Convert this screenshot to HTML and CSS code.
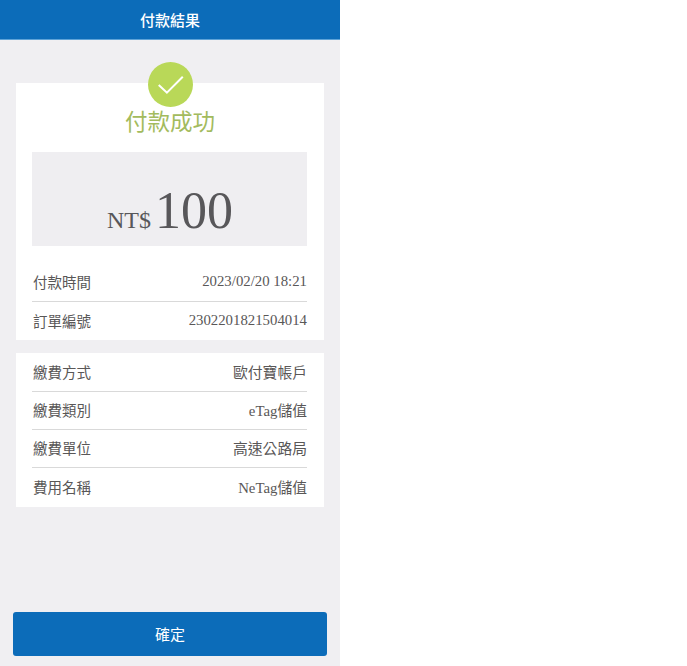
FILE: index.html
```html
<!DOCTYPE html>
<html lang="zh-Hant">
<head>
<meta charset="utf-8">
<title>付款結果</title>
<link rel="stylesheet" href="styles.css">
</head>
<body>
<main class="phone">
  <header class="topbar">付款結果</header>
  <div class="content">
    <section class="card summary">
      <svg class="check" width="45" height="45" viewBox="0 0 44 44" aria-hidden="true">
        <circle cx="22" cy="22" r="22" fill="#b9d858"/>
        <path d="M10.500 22.500 L18.500 30 L34 14.500" fill="none" stroke="#fff" stroke-width="2"/>
      </svg>
      <h1 class="status">付款成功</h1>
      <div class="amount"><span class="currency">NT$</span><span class="value">100</span></div>
      <div class="rows">
        <div class="row"><span class="label">付款時間</span><span class="val">2023/02/20 18:21</span></div>
        <div class="row"><span class="label">訂單編號</span><span class="val">2302201821504014</span></div>
      </div>
    </section>
    <section class="card details">
      <div class="rows">
        <div class="row"><span class="label">繳費方式</span><span class="val">歐付寶帳戶</span></div>
        <div class="row"><span class="label">繳費類別</span><span class="val">eTag儲值</span></div>
        <div class="row"><span class="label">繳費單位</span><span class="val">高速公路局</span></div>
        <div class="row"><span class="label">費用名稱</span><span class="val">NeTag儲值</span></div>
      </div>
    </section>
    <button class="confirm" type="button">確定</button>
  </div>
</main>
</body>
</html>
```
FILE: styles.css
```css
html, body {
  margin: 0;
  padding: 0;
  background: #fff;
}
body {
  font-family: "Liberation Serif", "Noto Sans CJK TC", serif;
  color: #595757;
}
.phone {
  width: 340px;
  height: 666px;
  background: #f0eff2;
  display: flex;
  flex-direction: column;
}
.topbar {
  height: 39px;
  line-height: 39px;
  flex: none;
  background: #0c6cb9;
  border-bottom: 1px solid #5ea3d8;
  color: #fff;
  text-align: center;
  font-family: "Noto Sans CJK TC", sans-serif;
  font-size: 15px;
  font-weight: 500;
}
.content {
  flex: 1;
  display: flex;
  flex-direction: column;
  padding: 43.400px 16px 10.500px;
}
.card {
  background: #fff;
  padding: 0 16px;
}
.summary {
  height: 257px;
  box-sizing: border-box;
  display: flex;
  flex-direction: column;
  align-items: stretch;
}
.check {
  align-self: center;
  margin-top: -21.600px;
  flex: none;
}
.status {
  margin: 0;
  height: 45.500px;
  line-height: 26px;
  text-align: center;
  font-family: "Noto Sans CJK TC", sans-serif;
  font-size: 22.500px;
  font-weight: 400;
  color: #a3bb5d;
}
.amount {
  height: 94px;
  margin-right: 1px;
  background: #efeef1;
  display: flex;
  justify-content: center;
  align-items: baseline;
  padding-left: 1px;
  line-height: 118px;
  color: #58575a;
}
.currency {
  font-size: 24px;
  margin-right: 4px;
}
.value {
  font-size: 52px;
}
.rows {
  display: flex;
  flex-direction: column;
}
.summary .rows {
  margin-top: 18px;
}
.row {
  height: 38px;
  box-sizing: border-box;
  display: flex;
  justify-content: space-between;
  align-items: center;
  padding: 0 0 2px 1px;
  border-bottom: 1px solid #d9d9d9;
  margin-right: 1px;
  font-size: 15px;
}
.details .row {
  height: 38.330px;
}
.row:last-child {
  border-bottom: 0;
}
.label {
  font-family: "Noto Sans CJK TC", sans-serif;
  font-weight: 400;
  font-size: 14.500px;
  color: #595757;
}
.val {
  color: #595757;
  font-size: 14.800px;
}
.details {
  margin-top: 13px;
}
.confirm {
  margin: auto -3px 0;
  height: 43.500px;
  padding: 0 0 1px;
  border: 0;
  border-radius: 3px;
  background: #0c6cb9;
  color: #fff;
  font-family: "Noto Sans CJK TC", sans-serif;
  font-size: 15px;
  font-weight: 400;
}
```
